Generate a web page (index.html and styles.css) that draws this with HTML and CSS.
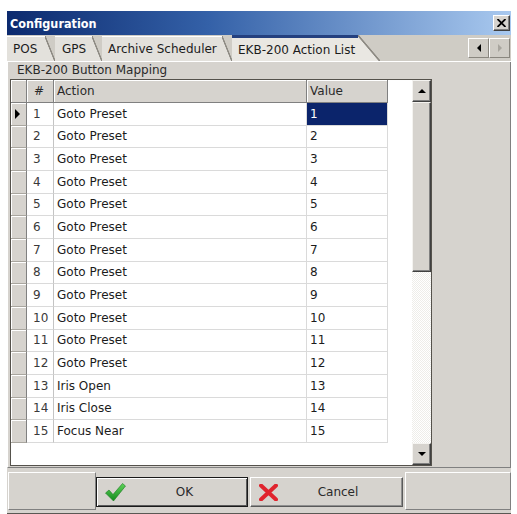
FILE: index.html
```html
<!DOCTYPE html>
<html lang="en">
<head>
    <meta charset="UTF-8">
    <meta name="viewport" content="width=device-width, initial-scale=1.0">
    <title>Configuration</title>
    <link rel="stylesheet" href="styles.css">
</head>
<body>

    <div class="dialog">

        <!-- Title bar -->
        <div class="titlebar">
            <span class="caption">Configuration</span>
            <div class="close-btn">
                <svg width="9" height="8" viewBox="0 0 9 8"><path d="M0.5 0 L8.5 8 M8.5 0 L0.5 8" stroke="#000" stroke-width="1.8"/></svg>
            </div>
        </div>

        <!-- Tabs -->
        <div class="tabstrip">
            <div class="tab tab-pos">POS</div>
            <div class="tab tab-gps">GPS</div>
            <div class="tab tab-archive">Archive Scheduler</div>
            <div class="tab tab-active">EKB-200 Action List</div>
            <div class="tab-scroll">
                <div class="scroll-btn"><span class="arrow-left"></span></div>
                <div class="scroll-btn"><span class="arrow-right"></span></div>
            </div>
        </div>

        <!-- Tab page -->
        <div class="page">
            <div class="group-label">EKB-200 Button Mapping</div>
            <div class="grid">
                <div class="grid-main">
                    <div class="row header">
                        <div class="cell sel"></div>
                        <div class="cell num">#</div>
                        <div class="cell action">Action</div>
                        <div class="cell value">Value</div>
                    </div>
                    <div class="row">
                        <div class="cell sel"><span class="current"></span></div>
                        <div class="cell num">1</div>
                        <div class="cell action">Goto Preset</div>
                        <div class="cell value selected">1</div>
                    </div>
                    <div class="row">
                        <div class="cell sel"></div>
                        <div class="cell num">2</div>
                        <div class="cell action">Goto Preset</div>
                        <div class="cell value">2</div>
                    </div>
                    <div class="row">
                        <div class="cell sel"></div>
                        <div class="cell num">3</div>
                        <div class="cell action">Goto Preset</div>
                        <div class="cell value">3</div>
                    </div>
                    <div class="row">
                        <div class="cell sel"></div>
                        <div class="cell num">4</div>
                        <div class="cell action">Goto Preset</div>
                        <div class="cell value">4</div>
                    </div>
                    <div class="row">
                        <div class="cell sel"></div>
                        <div class="cell num">5</div>
                        <div class="cell action">Goto Preset</div>
                        <div class="cell value">5</div>
                    </div>
                    <div class="row">
                        <div class="cell sel"></div>
                        <div class="cell num">6</div>
                        <div class="cell action">Goto Preset</div>
                        <div class="cell value">6</div>
                    </div>
                    <div class="row">
                        <div class="cell sel"></div>
                        <div class="cell num">7</div>
                        <div class="cell action">Goto Preset</div>
                        <div class="cell value">7</div>
                    </div>
                    <div class="row">
                        <div class="cell sel"></div>
                        <div class="cell num">8</div>
                        <div class="cell action">Goto Preset</div>
                        <div class="cell value">8</div>
                    </div>
                    <div class="row">
                        <div class="cell sel"></div>
                        <div class="cell num">9</div>
                        <div class="cell action">Goto Preset</div>
                        <div class="cell value">9</div>
                    </div>
                    <div class="row">
                        <div class="cell sel"></div>
                        <div class="cell num">10</div>
                        <div class="cell action">Goto Preset</div>
                        <div class="cell value">10</div>
                    </div>
                    <div class="row">
                        <div class="cell sel"></div>
                        <div class="cell num">11</div>
                        <div class="cell action">Goto Preset</div>
                        <div class="cell value">11</div>
                    </div>
                    <div class="row">
                        <div class="cell sel"></div>
                        <div class="cell num">12</div>
                        <div class="cell action">Goto Preset</div>
                        <div class="cell value">12</div>
                    </div>
                    <div class="row">
                        <div class="cell sel"></div>
                        <div class="cell num">13</div>
                        <div class="cell action">Iris Open</div>
                        <div class="cell value">13</div>
                    </div>
                    <div class="row">
                        <div class="cell sel"></div>
                        <div class="cell num">14</div>
                        <div class="cell action">Iris Close</div>
                        <div class="cell value">14</div>
                    </div>
                    <div class="row">
                        <div class="cell sel"></div>
                        <div class="cell num">15</div>
                        <div class="cell action">Focus Near</div>
                        <div class="cell value">15</div>
                    </div>
                </div>

                <!-- Vertical scrollbar -->
                <div class="vscroll">
                    <div class="sb-btn"><span class="arrow-up"></span></div>
                    <div class="sb-thumb"></div>
                    <div class="sb-track"></div>
                    <div class="sb-btn"><span class="arrow-down"></span></div>
                </div>
            </div>
        </div>

        <!-- Buttons -->
        <div class="buttonbar">
            <div class="panel panel-left"></div>
            <div class="btn btn-ok">
                <svg class="btn-icon" width="21" height="19" viewBox="0 0 21 19">
                    <defs>
                        <linearGradient id="chk" x1="0" y1="0" x2="0" y2="1">
                            <stop offset="0" stop-color="#5fd35a"/>
                            <stop offset="1" stop-color="#138a1c"/>
                        </linearGradient>
                    </defs>
                    <path d="M0.5 10 L4 7 L8 11.5 L17.5 0.5 L20.5 3 L8.5 18 Z" fill="url(#chk)" stroke="#1a7a1f" stroke-width="0.6"/>
                </svg>
                <span class="btn-label">OK</span>
            </div>
            <div class="btn btn-cancel">
                <svg class="btn-icon" width="19" height="17" viewBox="0 0 19 17">
                    <path d="M2 1.5 L17 15.5 M17 1.5 L2 15.5" stroke="#e0242e" stroke-width="4" stroke-linecap="round"/>
                </svg>
                <span class="btn-label">Cancel</span>
            </div>
            <div class="panel panel-right"></div>
        </div>

    </div>

</body>
</html>
```

FILE: styles.css
```css
body {
    margin: 0;
    background-color: #fff;
    font-family: "DejaVu Sans", Verdana, sans-serif;
    font-size: 12px;
    color: #1c1c1c;
}
.dialog {
    margin: 11px 0 0 7px;
    width: 504px;
    height: 502px;
    background-color: #d6d3ce;
    display: flex;
    flex-direction: column;
    border-bottom: 1px solid #5a5853;
}

/* Title bar */
.titlebar {
    height: 24px;
    flex: none;
    display: flex;
    align-items: center;
    justify-content: space-between;
    padding: 0 1px 0 3px;
    background: linear-gradient(to right, #0c2a6e 0%, #3461a8 40%, #a9c9ef 100%);
}
.caption {
    color: #fff;
    font-family: "DejaVu Sans Condensed", "DejaVu Sans", sans-serif;
    font-weight: bold;
    font-size: 12.5px;
}
.close-btn {
    width: 17px;
    height: 16px;
    box-sizing: border-box;
    background-color: #d6d3ce;
    border: 1px solid;
    border-color: #fff #404040 #404040 #fff;
    box-shadow: inset -1px -1px #808080;
    display: flex;
    align-items: center;
    justify-content: center;
}

/* Tabs */
.tabstrip {
    height: 27px;
    flex: none;
    display: flex;
    align-items: flex-end;
    background-color: #cfccc5;
    border-bottom: 1px solid #fff;
    box-sizing: border-box;
}
.tab {
    position: relative;
    height: 25px;
    box-sizing: border-box;
    display: flex;
    align-items: center;
    padding-left: 6px;
    background-color: #e3e1dc;
    border-top: 1px solid #fff;
}
.tab::after {
    content: '';
    position: absolute;
    right: 0;
    top: -1px;
    bottom: 0;
    width: 10px;
    background: linear-gradient(to top right, #e3e1dc 44%, #8e8b84 47%, #8e8b84 52%, #cfccc5 55%);
}
.tab-pos { width: 48px; }
.tab-gps { width: 47px; padding-left: 7px; }
.tab-archive { width: 130px; }
.tab-active {
    width: 148px;
    height: 26px;
    background-color: #e9e7e2;
    border-top: 3px solid #24407f;
}
.tab-active::after {
    top: -3px;
    width: 22px;
    background: linear-gradient(to top right, #e9e7e2 46%, #8e8b84 48%, #8e8b84 51%, #cfccc5 53%);
}
.tab-scroll {
    margin-left: auto;
    margin-right: 1px;
    align-self: center;
    display: flex;
}
.scroll-btn {
    width: 21px;
    height: 20px;
    box-sizing: border-box;
    border: 1px solid;
    border-color: #fff #8a877f #8a877f #fff;
    display: flex;
    align-items: center;
    justify-content: center;
}
.arrow-left {
    border-right: 4px solid #000;
    border-top: 4px solid transparent;
    border-bottom: 4px solid transparent;
}
.arrow-right {
    border-left: 4px solid #a8a59e;
    border-top: 4px solid transparent;
    border-bottom: 4px solid transparent;
}

/* Tab page */
.page {
    height: 406px;
    flex: none;
    box-sizing: border-box;
    border-left: 1px solid #fff;
    border-right: 1px solid #808080;
    border-bottom: 1px solid #808080;
    padding-left: 2px;
}
.group-label {
    height: 17px;
    line-height: 17px;
    padding-left: 7px;
    color: #2a2a2a;
}
.grid {
    width: 422px;
    height: 387px;
    box-sizing: border-box;
    border: 1px solid #55524c;
    background-color: #fff;
    display: flex;
}
.grid-main {
    flex: 1;
}
.row {
    display: flex;
    height: 22.67px;
}
.row.header {
    height: 23px;
}
.cell {
    box-sizing: border-box;
    display: flex;
    align-items: center;
    padding-left: 3px;
    border-right: 1px solid #dadada;
    border-bottom: 1px solid #dadada;
    white-space: nowrap;
}
.cell.sel {
    width: 16px;
    padding-left: 4px;
    background-color: #d6d3ce;
    border-right: 1px solid #808080;
    border-bottom: 1px solid #a9a69f;
    box-shadow: inset 1px 1px #fff;
}
.cell.num {
    width: 27px;
    padding-left: 6px;
    color: #3a3a3a;
    border-right-color: #c4c4c4;
}
.cell.action {
    width: 253px;
}
.cell.value {
    width: 81px;
}
.header .cell {
    background-color: #d6d3ce;
    border-right: 1px solid #808080;
    border-bottom: 1px solid #808080;
    box-shadow: inset 1px 1px #fff;
    color: #2a2a2a;
}
.header .cell.num {
    padding-left: 7px;
}
.cell.selected {
    background-color: #0b246b;
    color: #fff;
}
.current {
    border-left: 5px solid #000;
    border-top: 5px solid transparent;
    border-bottom: 5px solid transparent;
}

/* Scrollbar */
.vscroll {
    width: 19px;
    display: flex;
    flex-direction: column;
}
.sb-btn, .sb-thumb {
    box-sizing: border-box;
    background-color: #d6d3ce;
    border: 1px solid;
    border-color: #f4f3f0 #404040 #404040 #f4f3f0;
    box-shadow: inset -1px -1px #808080;
}
.sb-btn {
    height: 22px;
    display: flex;
    align-items: center;
    justify-content: center;
}
.sb-thumb {
    height: 170px;
}
.sb-track {
    flex: 1;
    background: repeating-conic-gradient(#fff 0 25%, #eeede9 0 50%) 0 0 / 2px 2px;
}
.arrow-up {
    border-bottom: 4px solid #000;
    border-left: 4px solid transparent;
    border-right: 4px solid transparent;
}
.arrow-down {
    border-top: 4px solid #000;
    border-left: 4px solid transparent;
    border-right: 4px solid transparent;
}

/* Button bar */
.buttonbar {
    height: 45px;
    flex: none;
    box-sizing: border-box;
    display: flex;
    align-items: flex-start;
    padding: 4px 0 0 1px;
}
.panel {
    height: 38px;
    box-sizing: border-box;
    border: 1px solid;
    border-color: #fff #808080 #808080 #fff;
}
.panel-left {
    width: 88px;
}
.panel-right {
    flex: 1;
    margin-left: 2px;
}
.btn {
    height: 30px;
    margin-top: 5px;
    box-sizing: border-box;
    display: flex;
    align-items: center;
    padding-left: 8px;
    color: #2a2a2a;
}
.btn-ok {
    width: 152px;
    border: 1px solid #1a1a1a;
    box-shadow: inset 1px 1px #fff, inset -1px -1px #5a5a5a;
}
.btn-cancel {
    width: 153px;
    margin-left: 2px;
    border: 1px solid;
    border-color: #fff #5a5a5a #5a5a5a #fff;
    box-shadow: inset -1px -1px #909090;
}
.btn-label {
    flex: 1;
    text-align: center;
    padding-right: 4px;
}
```
